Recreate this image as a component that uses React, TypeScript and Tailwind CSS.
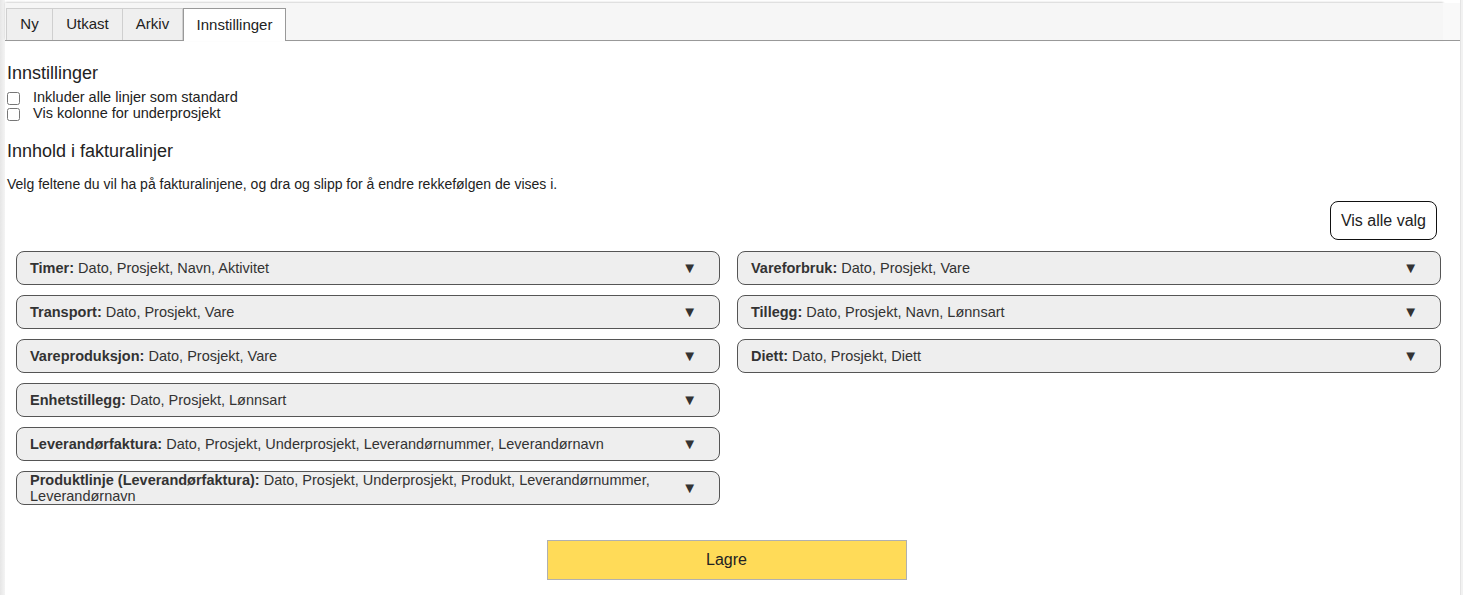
import React from 'react'

const LEFT = [
  { name: 'Timer', fields: 'Dato, Prosjekt, Navn, Aktivitet' },
  { name: 'Transport', fields: 'Dato, Prosjekt, Vare' },
  { name: 'Vareproduksjon', fields: 'Dato, Prosjekt, Vare' },
  { name: 'Enhetstillegg', fields: 'Dato, Prosjekt, Lønnsart' },
  { name: 'Leverandørfaktura', fields: 'Dato, Prosjekt, Underprosjekt, Leverandørnummer, Leverandørnavn' },
  { name: 'Produktlinje (Leverandørfaktura)', fields: 'Dato, Prosjekt, Underprosjekt, Produkt, Leverandørnummer, Leverandørnavn' },
]

const RIGHT = [
  { name: 'Vareforbruk', fields: 'Dato, Prosjekt, Vare' },
  { name: 'Tillegg', fields: 'Dato, Prosjekt, Navn, Lønnsart' },
  { name: 'Diett', fields: 'Dato, Prosjekt, Diett' },
]

const TABS = [
  { label: 'Ny', w: 'w-[47px]' },
  { label: 'Utkast', w: 'w-[71px]' },
  { label: 'Arkiv', w: 'w-[61px]' },
]

function LineBox({ name, fields }: { name: string; fields: string }) {
  return (
    <div className="flex items-center h-[34px] bg-[#eeeeee] border border-[#555] rounded-[8px] pl-[13px] pr-[22px] text-[14.5px] leading-[16px] text-[#333]">
      <div className="flex-1 pr-[22px]">
        <b className="font-bold">{name}:</b> {fields}
      </div>
      <span className="text-[15px] text-[#333]">▼</span>
    </div>
  )
}

export default function App() {
  return (
    <div className="flex min-h-[595px] bg-white text-[#222]" style={{ fontFamily: '"Liberation Sans", Arial, sans-serif' }}>
      <div className="w-[5px] bg-[linear-gradient(to_right,#e6e6e6,#f4f4f4)] shrink-0" />
      <div className="flex-1 flex flex-col">
        {/* tab bar */}
        <div className="flex pt-[3px]">
          <div className="flex-1 h-[37px] bg-[#f6f6f6] shadow-[0_-1px_2px_rgba(0,0,0,0.12),1px_0_2px_rgba(0,0,0,0.12)] flex items-end pl-[1px]">
            {TABS.map(t => (
              <div key={t.label} className={`${t.w} h-[32px] flex items-center justify-center border border-[#cfcfcf] border-b-0 -mr-px bg-[#efefef] text-[15px] text-[#222]`}>
                {t.label}
              </div>
            ))}
            <div className="w-[103px] h-[33px] flex items-center justify-center border border-[#999] border-b-0 bg-white text-[15px] text-[#222] -mb-px relative z-10 ml-[1px]">
              Innstillinger
            </div>
          </div>
          <div className="w-[17px] bg-[#f9f9f9]" />
        </div>
        <div className="h-px bg-[#999]" />

        <div className="pl-[2px] pr-[19px]">
          <h2 className="text-[18px] leading-[20px] mt-[22px] text-[#222]">Innstillinger</h2>
          <label className="flex items-center h-[16px] mt-[7px] text-[14.5px]">
            <input type="checkbox" className="w-[13px] h-[13px] m-0 mr-[13px]" />
            Inkluder alle linjer som standard
          </label>
          <label className="flex items-center h-[16px] text-[14.5px]">
            <input type="checkbox" className="w-[13px] h-[13px] m-0 mr-[13px]" />
            Vis kolonne for underprosjekt
          </label>

          <h2 className="text-[18px] leading-[20px] mt-[19px] text-[#222]">Innhold i fakturalinjer</h2>
          <p className="text-[14px] leading-[15px] mt-[16px]">
            Velg feltene du vil ha på fakturalinjene, og dra og slipp for å endre rekkefølgen de vises i.
          </p>

          <div className="flex justify-end mt-[9px] mr-[4px]">
            <button className="h-[39px] px-[10px] border border-[#111] rounded-[8px] bg-white text-[16px] text-[#222]">
              Vis alle valg
            </button>
          </div>

          <div className="grid grid-cols-2 gap-x-[17px] mt-[11px] pl-[9px]">
            <div className="flex flex-col gap-[10px]">
              {LEFT.map(l => <LineBox key={l.name} {...l} />)}
            </div>
            <div className="flex flex-col gap-[10px]">
              {RIGHT.map(l => <LineBox key={l.name} {...l} />)}
            </div>
          </div>

          <div className="flex justify-center mt-[35px] pl-[5px]">
            <button className="w-[360px] h-[40px] bg-[#ffdb58] border border-[#b0b0b0] text-[16px] text-[#222]">
              Lagre
            </button>
          </div>
        </div>
      </div>
      <div className="w-[3px] bg-[#f2f2f2] border-l border-[#e4e4e4] shrink-0" />
    </div>
  )
}
